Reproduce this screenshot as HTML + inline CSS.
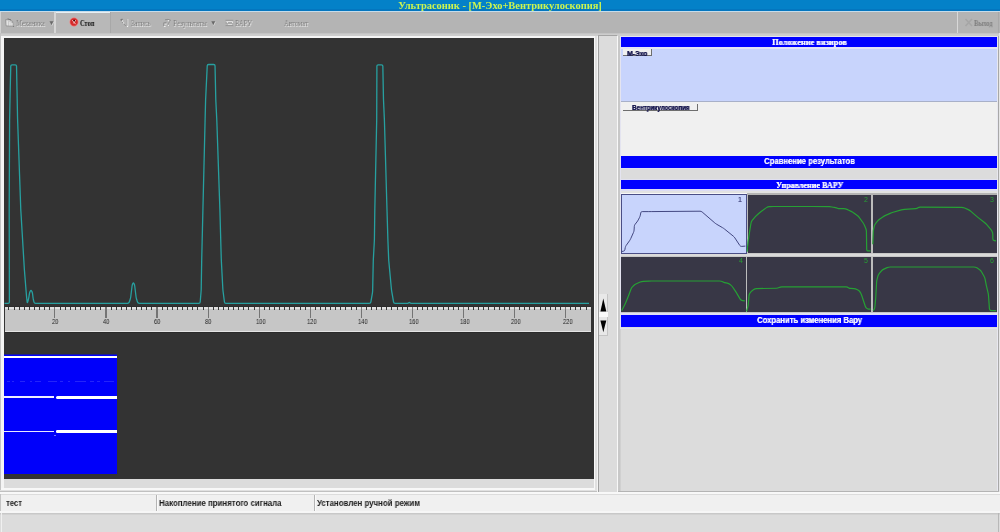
<!DOCTYPE html>
<html><head><meta charset="utf-8"><style>
html,body{margin:0;padding:0;}
body{width:1000px;height:532px;overflow:hidden;position:relative;background:#dcdcdc;}
div{position:absolute;box-sizing:border-box;}
.t{will-change:transform;}
svg{position:absolute;left:0;top:0;}
</style></head><body>
<div style="left:0px;top:0px;width:1000px;height:532px;background:#dcdcdc;"></div>
<div style="left:0px;top:0px;width:1000px;height:10.5px;background:#0481c8;"></div>
<div style="left:0px;top:9px;width:1000px;height:1.5px;background:#0476bf;"></div>
<div style="left:0px;top:10.5px;width:1000px;height:1.5px;background:#c6dcea;"></div>
<div class="t" style="left:199.8px;top:0.3px;width:600px;text-align:center;white-space:nowrap;font:bold 10.45px/12px 'Liberation Serif', serif;color:#ccf450;">Ультрасоник - [М-Эхо+Вентрикулоскопия]</div>
<div style="left:0px;top:12px;width:1000px;height:21px;background:#b4b4b4;"></div>
<div style="left:0px;top:33px;width:1000px;height:2.5px;background:#c4c4c4;"></div>
<div style="left:0px;top:12px;width:1px;height:21px;background:#d0d0d0;"></div>
<div style="left:54px;top:12px;width:1.5px;height:21px;background:#d6d6d6;"></div>
<div style="left:55.5px;top:12px;width:55px;height:21px;background:#b8b8b8;"></div>
<div style="left:55.5px;top:11.5px;width:55px;height:1px;background:#e8f0f4;"></div>
<div style="left:110px;top:12px;width:1px;height:21px;background:#a8a8a8;"></div>
<div style="left:957px;top:12px;width:1px;height:21px;background:#d8d8d8;"></div>
<div style="left:998px;top:12px;width:1px;height:21px;background:#a8a8a8;"></div>
<div class="t" style="left:16px;top:17.9px;white-space:nowrap;transform-origin:0 0;transform:scaleX(0.8585);font:8px/12px 'Liberation Serif', serif;color:#7c7c7c;text-shadow:0.8px 0.8px 0 #ececec;">Механика</div>
<div class="t" style="left:80.4px;top:17.9px;white-space:nowrap;transform-origin:0 0;transform:scaleX(0.8845);font:bold 7.2px/12px 'Liberation Serif', serif;color:#101010;">Стоп</div>
<div class="t" style="left:130.6px;top:17.9px;white-space:nowrap;transform-origin:0 0;transform:scaleX(0.8441);font:8px/12px 'Liberation Serif', serif;color:#7c7c7c;text-shadow:0.8px 0.8px 0 #ececec;">Запись</div>
<div class="t" style="left:173.2px;top:17.9px;white-space:nowrap;transform-origin:0 0;transform:scaleX(0.8973);font:8px/12px 'Liberation Serif', serif;color:#7c7c7c;text-shadow:0.8px 0.8px 0 #ececec;">Результаты</div>
<div class="t" style="left:235px;top:17.9px;white-space:nowrap;transform-origin:0 0;transform:scaleX(0.8280);font:8px/12px 'Liberation Serif', serif;color:#7c7c7c;text-shadow:0.8px 0.8px 0 #ececec;">ВАРУ</div>
<div class="t" style="left:283.5px;top:17.9px;white-space:nowrap;transform-origin:0 0;transform:scaleX(0.8435);font:8px/12px 'Liberation Serif', serif;color:#7c7c7c;text-shadow:0.8px 0.8px 0 #ececec;">Автомат</div>
<div class="t" style="left:974.3px;top:17.9px;white-space:nowrap;transform-origin:0 0;transform:scaleX(0.8714);font:bold 7.4px/12px 'Liberation Serif', serif;color:#7c7c7c;">Выход</div>
<svg width="1000" height="40"><polygon points="49.5,21.2 53.8,21.2 51.65,25.2" fill="#6a6a6a"/><line x1="53.8" y1="21.5" x2="51.9" y2="25.6" stroke="#e6e6e6" stroke-width="0.7"/><polygon points="211.3,21.2 215.6,21.2 213.45,25.2" fill="#6a6a6a"/><line x1="215.6" y1="21.5" x2="213.7" y2="25.6" stroke="#e6e6e6" stroke-width="0.7"/><path d="M5.6,19.6 L8.8,19.1 L12.6,21.4 L13.1,26.2 L6.2,26 Z" fill="#c8c8c8" stroke="#8e8e8e" stroke-width="0.75"/><path d="M7.6,19 L11,19.8" stroke="#707070" stroke-width="0.9"/><path d="M7.2,20.8 L7.2,25.3 M9.9,21.8 L9.9,25.5 M12,23 L12,25.6" stroke="#ececec" stroke-width="1.1"/><circle cx="13.6" cy="26.6" r="0.5" fill="#6a6a6a"/><circle cx="74" cy="22" r="4.2" fill="#d42828" stroke="#f09090" stroke-width="0.7"/><path d="M72.3,20.2 L75.6,24.2 M75.7,20.2 L73.4,23.4" stroke="#f6c8c8" stroke-width="1.0" fill="none"/><circle cx="74.2" cy="20.6" r="0.9" fill="#3a0808"/><path d="M120.6,20.2 L122.6,19.2" stroke="#7a7a7a" stroke-width="1.6"/><path d="M122,22 L125.8,26" stroke="#8c8c8c" stroke-width="0.9"/><path d="M127.8,19 L127.8,26.5" stroke="#d6d6d6" stroke-width="1.3"/><path d="M127,19.5 L127,26" stroke="#9a9a9a" stroke-width="0.5"/><circle cx="122.6" cy="21" r="0.7" fill="#f0f0f0"/><circle cx="123.6" cy="23" r="0.7" fill="#f0f0f0"/><circle cx="127.5" cy="26.4" r="0.6" fill="#f4f4f4"/><path d="M165,19.8 Q168,18.6 171,20.4" stroke="#8a8a8a" stroke-width="0.9" fill="none"/><path d="M168.2,20.5 Q170.4,21.8 168.6,23.3 Q166.8,24.6 169.6,25.8" stroke="#909090" stroke-width="0.9" fill="none"/><path d="M163.6,26 L163.6,22.8 L166.5,22.3" stroke="#8c8c8c" stroke-width="0.8" fill="none"/><circle cx="168.4" cy="20.7" r="0.7" fill="#f0f0f0"/><circle cx="168.6" cy="25.4" r="0.6" fill="#f0f0f0"/><ellipse cx="164.8" cy="26.6" rx="1" ry="0.5" fill="#f4f4f4"/><path d="M164.6,24.6 L167,24" stroke="#e8e8e8" stroke-width="0.7"/><path d="M225.5,20.3 L233.3,20.3 M225.5,23 L233.3,23 M225.5,25.6 L233.3,25.6" stroke="#8e8e8e" stroke-width="0.8"/><path d="M226.3,21.6 L232.8,21.6 M228,24.4 L232,24.4" stroke="#ececec" stroke-width="0.8"/><circle cx="227.4" cy="22.6" r="0.6" fill="#f4f4f4"/><circle cx="232.6" cy="22.6" r="0.6" fill="#f4f4f4"/><path d="M965.5,19 L972,26 M972,19 L965.5,26" stroke="#a6a6a6" stroke-width="1.6"/></svg>
<div style="left:0px;top:34px;width:1000px;height:2px;background:#cdcdcd;"></div>
<div style="left:0px;top:36px;width:597.3px;height:2px;background:#f4f4f4;"></div>
<div style="left:1.3px;top:36px;width:2.4px;height:456px;background:#f4f4f4;"></div>
<div style="left:0px;top:33px;width:1.3px;height:460px;background:#c4c4c4;"></div>
<div style="left:3.7px;top:38px;width:0.5px;height:441px;background:#888888;"></div>
<div style="left:4px;top:38px;width:589.6px;height:441.2px;background:#333333;"></div>
<div style="left:593.6px;top:36px;width:1.6px;height:453.6px;background:#f8f8f8;"></div>
<div style="left:4px;top:479.2px;width:589.6px;height:8.7px;background:#dcdcdc;"></div>
<div style="left:1.3px;top:487.9px;width:593.9px;height:1.7px;background:#f8f8f8;"></div>
<div style="left:595.2px;top:36px;width:1.5px;height:455.3px;background:#e0e0e0;"></div>
<div style="left:0px;top:489.6px;width:596.7px;height:1.7px;background:#e0e0e0;"></div>
<div style="left:596.7px;top:36px;width:0.6px;height:456px;background:#c0c0c0;"></div>
<div style="left:0px;top:491.3px;width:597.3px;height:0.7px;background:#c0c0c0;"></div>
<div style="left:4.7px;top:305.8px;width:586.8px;height:1px;background:#2c2c2c;"></div>
<div style="left:4.7px;top:306.8px;width:586.8px;height:24.4px;background:#c6c6c6;"></div>
<div style="left:4.7px;top:306.8px;width:586.8px;height:2.7px;background:#e0e0e0;"></div>
<div style="left:4.7px;top:331.2px;width:586.8px;height:1px;background:#e4e4e4;"></div>
<div style="left:4.7px;top:332.2px;width:586.8px;height:1px;background:#2a2a2a;"></div>
<div style="left:8.437000000000001px;top:306.8px;width:1px;height:3.4px;background:#383838;"></div>
<div style="left:13.544px;top:306.8px;width:1px;height:3.4px;background:#383838;"></div>
<div style="left:18.651000000000003px;top:306.8px;width:1px;height:3.4px;background:#383838;"></div>
<div style="left:23.758000000000003px;top:306.8px;width:1px;height:3.4px;background:#383838;"></div>
<div style="left:28.865000000000002px;top:306.8px;width:1px;height:3.4px;background:#383838;"></div>
<div style="left:33.972px;top:306.8px;width:1px;height:3.4px;background:#383838;"></div>
<div style="left:39.079px;top:306.8px;width:1px;height:3.4px;background:#383838;"></div>
<div style="left:44.186px;top:306.8px;width:1px;height:3.4px;background:#383838;"></div>
<div style="left:49.293px;top:306.8px;width:1px;height:3.4px;background:#383838;"></div>
<div style="left:54.3px;top:306.8px;width:1.2px;height:11.2px;background:#747474;"></div>
<div class="t" style="left:51.8px;top:317.5px;white-space:nowrap;font:6.7px/8px 'Liberation Sans', sans-serif;color:#1c1c1c;transform-origin:0 0;transform:scaleX(0.86);">20</div>
<div style="left:59.507px;top:306.8px;width:1px;height:3.4px;background:#383838;"></div>
<div style="left:64.614px;top:306.8px;width:1px;height:3.4px;background:#383838;"></div>
<div style="left:69.721px;top:306.8px;width:1px;height:3.4px;background:#383838;"></div>
<div style="left:74.828px;top:306.8px;width:1px;height:3.4px;background:#383838;"></div>
<div style="left:79.935px;top:306.8px;width:1px;height:3.4px;background:#383838;"></div>
<div style="left:85.042px;top:306.8px;width:1px;height:3.4px;background:#383838;"></div>
<div style="left:90.149px;top:306.8px;width:1px;height:3.4px;background:#383838;"></div>
<div style="left:95.256px;top:306.8px;width:1px;height:3.4px;background:#383838;"></div>
<div style="left:100.363px;top:306.8px;width:1px;height:3.4px;background:#383838;"></div>
<div style="left:105.37px;top:306.8px;width:1.2px;height:11.2px;background:#747474;"></div>
<div class="t" style="left:102.87px;top:317.5px;white-space:nowrap;font:6.7px/8px 'Liberation Sans', sans-serif;color:#1c1c1c;transform-origin:0 0;transform:scaleX(0.86);">40</div>
<div style="left:110.577px;top:306.8px;width:1px;height:3.4px;background:#383838;"></div>
<div style="left:115.684px;top:306.8px;width:1px;height:3.4px;background:#383838;"></div>
<div style="left:120.791px;top:306.8px;width:1px;height:3.4px;background:#383838;"></div>
<div style="left:125.89800000000001px;top:306.8px;width:1px;height:3.4px;background:#383838;"></div>
<div style="left:131.00500000000002px;top:306.8px;width:1px;height:3.4px;background:#383838;"></div>
<div style="left:136.11200000000002px;top:306.8px;width:1px;height:3.4px;background:#383838;"></div>
<div style="left:141.21900000000002px;top:306.8px;width:1px;height:3.4px;background:#383838;"></div>
<div style="left:146.32600000000002px;top:306.8px;width:1px;height:3.4px;background:#383838;"></div>
<div style="left:151.43300000000002px;top:306.8px;width:1px;height:3.4px;background:#383838;"></div>
<div style="left:156.44000000000003px;top:306.8px;width:1.2px;height:11.2px;background:#747474;"></div>
<div class="t" style="left:153.94000000000003px;top:317.5px;white-space:nowrap;font:6.7px/8px 'Liberation Sans', sans-serif;color:#1c1c1c;transform-origin:0 0;transform:scaleX(0.86);">60</div>
<div style="left:161.64700000000002px;top:306.8px;width:1px;height:3.4px;background:#383838;"></div>
<div style="left:166.75400000000002px;top:306.8px;width:1px;height:3.4px;background:#383838;"></div>
<div style="left:171.86100000000002px;top:306.8px;width:1px;height:3.4px;background:#383838;"></div>
<div style="left:176.96800000000002px;top:306.8px;width:1px;height:3.4px;background:#383838;"></div>
<div style="left:182.07500000000002px;top:306.8px;width:1px;height:3.4px;background:#383838;"></div>
<div style="left:187.18200000000002px;top:306.8px;width:1px;height:3.4px;background:#383838;"></div>
<div style="left:192.28900000000002px;top:306.8px;width:1px;height:3.4px;background:#383838;"></div>
<div style="left:197.39600000000002px;top:306.8px;width:1px;height:3.4px;background:#383838;"></div>
<div style="left:202.50300000000001px;top:306.8px;width:1px;height:3.4px;background:#383838;"></div>
<div style="left:207.51000000000002px;top:306.8px;width:1.2px;height:11.2px;background:#747474;"></div>
<div class="t" style="left:205.01000000000002px;top:317.5px;white-space:nowrap;font:6.7px/8px 'Liberation Sans', sans-serif;color:#1c1c1c;transform-origin:0 0;transform:scaleX(0.86);">80</div>
<div style="left:212.717px;top:306.8px;width:1px;height:3.4px;background:#383838;"></div>
<div style="left:217.824px;top:306.8px;width:1px;height:3.4px;background:#383838;"></div>
<div style="left:222.931px;top:306.8px;width:1px;height:3.4px;background:#383838;"></div>
<div style="left:228.038px;top:306.8px;width:1px;height:3.4px;background:#383838;"></div>
<div style="left:233.145px;top:306.8px;width:1px;height:3.4px;background:#383838;"></div>
<div style="left:238.252px;top:306.8px;width:1px;height:3.4px;background:#383838;"></div>
<div style="left:243.359px;top:306.8px;width:1px;height:3.4px;background:#383838;"></div>
<div style="left:248.46600000000004px;top:306.8px;width:1px;height:3.4px;background:#383838;"></div>
<div style="left:253.57300000000004px;top:306.8px;width:1px;height:3.4px;background:#383838;"></div>
<div style="left:258.58px;top:306.8px;width:1.2px;height:11.2px;background:#747474;"></div>
<div class="t" style="left:256.08px;top:317.5px;white-space:nowrap;font:6.7px/8px 'Liberation Sans', sans-serif;color:#1c1c1c;transform-origin:0 0;transform:scaleX(0.86);">100</div>
<div style="left:263.787px;top:306.8px;width:1px;height:3.4px;background:#383838;"></div>
<div style="left:268.894px;top:306.8px;width:1px;height:3.4px;background:#383838;"></div>
<div style="left:274.001px;top:306.8px;width:1px;height:3.4px;background:#383838;"></div>
<div style="left:279.108px;top:306.8px;width:1px;height:3.4px;background:#383838;"></div>
<div style="left:284.215px;top:306.8px;width:1px;height:3.4px;background:#383838;"></div>
<div style="left:289.322px;top:306.8px;width:1px;height:3.4px;background:#383838;"></div>
<div style="left:294.429px;top:306.8px;width:1px;height:3.4px;background:#383838;"></div>
<div style="left:299.536px;top:306.8px;width:1px;height:3.4px;background:#383838;"></div>
<div style="left:304.643px;top:306.8px;width:1px;height:3.4px;background:#383838;"></div>
<div style="left:309.65px;top:306.8px;width:1.2px;height:11.2px;background:#747474;"></div>
<div class="t" style="left:307.15px;top:317.5px;white-space:nowrap;font:6.7px/8px 'Liberation Sans', sans-serif;color:#1c1c1c;transform-origin:0 0;transform:scaleX(0.86);">120</div>
<div style="left:314.85699999999997px;top:306.8px;width:1px;height:3.4px;background:#383838;"></div>
<div style="left:319.964px;top:306.8px;width:1px;height:3.4px;background:#383838;"></div>
<div style="left:325.07099999999997px;top:306.8px;width:1px;height:3.4px;background:#383838;"></div>
<div style="left:330.178px;top:306.8px;width:1px;height:3.4px;background:#383838;"></div>
<div style="left:335.285px;top:306.8px;width:1px;height:3.4px;background:#383838;"></div>
<div style="left:340.392px;top:306.8px;width:1px;height:3.4px;background:#383838;"></div>
<div style="left:345.499px;top:306.8px;width:1px;height:3.4px;background:#383838;"></div>
<div style="left:350.606px;top:306.8px;width:1px;height:3.4px;background:#383838;"></div>
<div style="left:355.713px;top:306.8px;width:1px;height:3.4px;background:#383838;"></div>
<div style="left:360.71999999999997px;top:306.8px;width:1.2px;height:11.2px;background:#747474;"></div>
<div class="t" style="left:358.21999999999997px;top:317.5px;white-space:nowrap;font:6.7px/8px 'Liberation Sans', sans-serif;color:#1c1c1c;transform-origin:0 0;transform:scaleX(0.86);">140</div>
<div style="left:365.927px;top:306.8px;width:1px;height:3.4px;background:#383838;"></div>
<div style="left:371.034px;top:306.8px;width:1px;height:3.4px;background:#383838;"></div>
<div style="left:376.141px;top:306.8px;width:1px;height:3.4px;background:#383838;"></div>
<div style="left:381.248px;top:306.8px;width:1px;height:3.4px;background:#383838;"></div>
<div style="left:386.355px;top:306.8px;width:1px;height:3.4px;background:#383838;"></div>
<div style="left:391.462px;top:306.8px;width:1px;height:3.4px;background:#383838;"></div>
<div style="left:396.569px;top:306.8px;width:1px;height:3.4px;background:#383838;"></div>
<div style="left:401.676px;top:306.8px;width:1px;height:3.4px;background:#383838;"></div>
<div style="left:406.783px;top:306.8px;width:1px;height:3.4px;background:#383838;"></div>
<div style="left:411.78999999999996px;top:306.8px;width:1.2px;height:11.2px;background:#747474;"></div>
<div class="t" style="left:409.28999999999996px;top:317.5px;white-space:nowrap;font:6.7px/8px 'Liberation Sans', sans-serif;color:#1c1c1c;transform-origin:0 0;transform:scaleX(0.86);">160</div>
<div style="left:416.997px;top:306.8px;width:1px;height:3.4px;background:#383838;"></div>
<div style="left:422.104px;top:306.8px;width:1px;height:3.4px;background:#383838;"></div>
<div style="left:427.211px;top:306.8px;width:1px;height:3.4px;background:#383838;"></div>
<div style="left:432.318px;top:306.8px;width:1px;height:3.4px;background:#383838;"></div>
<div style="left:437.425px;top:306.8px;width:1px;height:3.4px;background:#383838;"></div>
<div style="left:442.532px;top:306.8px;width:1px;height:3.4px;background:#383838;"></div>
<div style="left:447.639px;top:306.8px;width:1px;height:3.4px;background:#383838;"></div>
<div style="left:452.746px;top:306.8px;width:1px;height:3.4px;background:#383838;"></div>
<div style="left:457.853px;top:306.8px;width:1px;height:3.4px;background:#383838;"></div>
<div style="left:462.85999999999996px;top:306.8px;width:1.2px;height:11.2px;background:#747474;"></div>
<div class="t" style="left:460.35999999999996px;top:317.5px;white-space:nowrap;font:6.7px/8px 'Liberation Sans', sans-serif;color:#1c1c1c;transform-origin:0 0;transform:scaleX(0.86);">180</div>
<div style="left:468.067px;top:306.8px;width:1px;height:3.4px;background:#383838;"></div>
<div style="left:473.174px;top:306.8px;width:1px;height:3.4px;background:#383838;"></div>
<div style="left:478.281px;top:306.8px;width:1px;height:3.4px;background:#383838;"></div>
<div style="left:483.388px;top:306.8px;width:1px;height:3.4px;background:#383838;"></div>
<div style="left:488.495px;top:306.8px;width:1px;height:3.4px;background:#383838;"></div>
<div style="left:493.60200000000003px;top:306.8px;width:1px;height:3.4px;background:#383838;"></div>
<div style="left:498.709px;top:306.8px;width:1px;height:3.4px;background:#383838;"></div>
<div style="left:503.81600000000003px;top:306.8px;width:1px;height:3.4px;background:#383838;"></div>
<div style="left:508.923px;top:306.8px;width:1px;height:3.4px;background:#383838;"></div>
<div style="left:513.9300000000001px;top:306.8px;width:1.2px;height:11.2px;background:#747474;"></div>
<div class="t" style="left:511.43000000000006px;top:317.5px;white-space:nowrap;font:6.7px/8px 'Liberation Sans', sans-serif;color:#1c1c1c;transform-origin:0 0;transform:scaleX(0.86);">200</div>
<div style="left:519.1370000000001px;top:306.8px;width:1px;height:3.4px;background:#383838;"></div>
<div style="left:524.244px;top:306.8px;width:1px;height:3.4px;background:#383838;"></div>
<div style="left:529.3510000000001px;top:306.8px;width:1px;height:3.4px;background:#383838;"></div>
<div style="left:534.4580000000001px;top:306.8px;width:1px;height:3.4px;background:#383838;"></div>
<div style="left:539.565px;top:306.8px;width:1px;height:3.4px;background:#383838;"></div>
<div style="left:544.672px;top:306.8px;width:1px;height:3.4px;background:#383838;"></div>
<div style="left:549.7790000000001px;top:306.8px;width:1px;height:3.4px;background:#383838;"></div>
<div style="left:554.8860000000001px;top:306.8px;width:1px;height:3.4px;background:#383838;"></div>
<div style="left:559.993px;top:306.8px;width:1px;height:3.4px;background:#383838;"></div>
<div style="left:565.0px;top:306.8px;width:1.2px;height:11.2px;background:#747474;"></div>
<div class="t" style="left:562.5px;top:317.5px;white-space:nowrap;font:6.7px/8px 'Liberation Sans', sans-serif;color:#1c1c1c;transform-origin:0 0;transform:scaleX(0.86);">220</div>
<div style="left:570.2070000000001px;top:306.8px;width:1px;height:3.4px;background:#383838;"></div>
<div style="left:575.3140000000001px;top:306.8px;width:1px;height:3.4px;background:#383838;"></div>
<div style="left:580.421px;top:306.8px;width:1px;height:3.4px;background:#383838;"></div>
<div style="left:585.528px;top:306.8px;width:1px;height:3.4px;background:#383838;"></div>
<div style="left:4px;top:354px;width:113px;height:120px;background:#0000fa;"></div>
<div style="left:4px;top:354px;width:113px;height:1px;background:#1a1a9a;"></div>
<div style="left:4px;top:355.7px;width:113px;height:2.4px;background:#ffffff;"></div>
<div style="left:4px;top:396.2px;width:50px;height:2px;background:#eeeeff;"></div>
<div style="left:55.5px;top:395.7px;width:61.5px;height:3.3px;background:#ffffff;border-radius:1.5px 0 0 1.5px;"></div>
<div style="left:4px;top:431px;width:49.5px;height:1.4px;background:#e8e8ff;"></div>
<div style="left:55.5px;top:430.4px;width:61.5px;height:2.7px;background:#ffffff;border-radius:1.3px 0 0 1.3px;"></div>
<div style="left:53.5px;top:434.5px;width:2px;height:1px;background:#7070f8;"></div>
<div style="left:7px;top:380.7px;width:3px;height:0.8px;background:#2424fa;"></div>
<div style="left:12px;top:380.7px;width:2px;height:0.8px;background:#2424fa;"></div>
<div style="left:20px;top:380.7px;width:5px;height:0.8px;background:#2424fa;"></div>
<div style="left:30px;top:380.7px;width:2px;height:0.8px;background:#2424fa;"></div>
<div style="left:35px;top:380.7px;width:6px;height:0.8px;background:#2424fa;"></div>
<div style="left:48px;top:380.7px;width:9px;height:0.8px;background:#2424fa;"></div>
<div style="left:60px;top:380.7px;width:3px;height:0.8px;background:#2424fa;"></div>
<div style="left:68px;top:380.7px;width:2px;height:0.8px;background:#2424fa;"></div>
<div style="left:75px;top:380.7px;width:11px;height:0.8px;background:#2424fa;"></div>
<div style="left:90px;top:380.7px;width:4px;height:0.8px;background:#2424fa;"></div>
<div style="left:97px;top:380.7px;width:3px;height:0.8px;background:#2424fa;"></div>
<div style="left:104px;top:380.7px;width:10px;height:0.8px;background:#2424fa;"></div>
<div style="left:597.3px;top:35.5px;width:1px;height:457px;background:#f4f4f4;"></div>
<div style="left:598.3px;top:35.5px;width:1px;height:457px;background:#a0a0a0;"></div>
<div style="left:598.3px;top:35.3px;width:18.5px;height:0.8px;background:#a4a4a4;"></div>
<div style="left:599.3px;top:36.1px;width:17.5px;height:456px;background:#dcdcdc;"></div>
<div style="left:616.8px;top:35.5px;width:1.4px;height:457px;background:#f8f8f8;"></div>
<div style="left:618.2px;top:35.5px;width:2.2px;height:457px;background:#c8c8c8;"></div>
<div style="left:620.4px;top:36px;width:0.8px;height:293px;background:#e4e4f0;"></div>
<div style="left:620.4px;top:329px;width:0.8px;height:162px;background:#d0d0d0;"></div>
<div style="left:599px;top:294px;width:8.5px;height:42.3px;background:#e8e8e8;border-right:1px solid #c4c4c4;border-bottom:1px solid #c4c4c4;"></div>
<div style="left:599px;top:312px;width:8.5px;height:5px;background:#fafafa;"></div>
<svg width="1000" height="532" style="left:0;top:0"><polygon points="603.3,298.5 600.4,311.5 606.3,311.5" fill="#000"/><polygon points="600.4,320.5 606.3,320.5 603.3,332.3" fill="#000"/></svg>
<div style="left:620.4px;top:36px;width:377px;height:1.2px;background:#e4e4f0;"></div>
<div style="left:621.2px;top:37.3px;width:375.4px;height:9.9px;background:#0000ff;"></div>
<div class="t" style="left:771.8px;top:36.2px;white-space:nowrap;transform-origin:0 0;transform:scaleX(0.9691);font:bold 8.6px/12px 'Liberation Serif', serif;color:#f4f4ff;text-shadow:0.3px 0 0 #f4f4ff;">Положение визиров</div>
<div style="left:621.2px;top:47.2px;width:375.4px;height:1.8px;background:#e4e4f6;"></div>
<div style="left:621.2px;top:49px;width:375.4px;height:51.8px;background:#c8d4fc;"></div>
<div style="left:621.2px;top:100.8px;width:375.4px;height:1.2px;background:#a8b0c8;"></div>
<div style="left:621.2px;top:102px;width:375.4px;height:54.1px;background:#f0f0f0;"></div>
<div style="left:996.6px;top:36px;width:1.2px;height:456px;background:#e8e8f0;"></div>
<div style="left:997.8px;top:36px;width:1px;height:456px;background:#a8a8a8;"></div>
<div style="left:998.8px;top:33px;width:1.2px;height:460px;background:#e6e6e6;"></div>
<div style="left:623px;top:49px;width:28.8px;height:6.8px;background:#f0f0f0;"></div>
<div style="left:650.8px;top:49px;width:1px;height:6.8px;background:#6e6e6e;"></div>
<div style="left:623px;top:54.8px;width:28.8px;height:1px;background:#6e6e6e;"></div>
<div class="t" style="left:627.25px;top:47.7px;white-space:nowrap;transform-origin:0 0;transform:scaleX(0.9579);font:bold 7.0px/12px 'Liberation Sans', sans-serif;color:#14144c;text-shadow:0.35px 0 0 #14144c;">М-Эхо</div>
<div style="left:623px;top:104px;width:74.8px;height:6.8px;background:#f0f0f0;"></div>
<div style="left:696.8px;top:104px;width:1px;height:6.8px;background:#6e6e6e;"></div>
<div style="left:623px;top:109.8px;width:74.8px;height:1px;background:#6e6e6e;"></div>
<div class="t" style="left:632px;top:102.4px;white-space:nowrap;transform-origin:0 0;transform:scaleX(0.9606);font:bold 6.4px/12px 'Liberation Sans', sans-serif;color:#14144c;text-shadow:0.35px 0 0 #14144c;">Вентрикулоскопия</div>
<div style="left:621.2px;top:156.1px;width:375.4px;height:11.8px;background:#0000ff;"></div>
<div class="t" style="left:763.8px;top:154.6px;white-space:nowrap;transform-origin:0 0;transform:scaleX(0.8947);font:bold 8.6px/12px 'Liberation Sans', sans-serif;color:#f4f4ff;text-shadow:0.25px 0 0 #f4f4ff;">Сравнение результатов</div>
<div style="left:621.2px;top:167.9px;width:375.4px;height:1.2px;background:#e0e0f0;"></div>
<div style="left:621.2px;top:169.1px;width:375.4px;height:10px;background:#dcdcdc;"></div>
<div style="left:621.2px;top:179.1px;width:375.4px;height:0.8px;background:#e0e0f0;"></div>
<div style="left:621.2px;top:179.9px;width:375.4px;height:8.8px;background:#0000ff;"></div>
<div class="t" style="left:775.7px;top:179.6px;white-space:nowrap;transform-origin:0 0;transform:scaleX(0.9762);font:bold 8.3px/12px 'Liberation Serif', serif;color:#f4f4ff;text-shadow:0.3px 0 0 #f4f4ff;">Управление ВАРУ</div>
<div style="left:621.2px;top:188.7px;width:375.4px;height:1.9px;background:#dcdcf4;"></div>
<div style="left:621.2px;top:190.6px;width:375.4px;height:2.3px;background:#e2e2e2;"></div>
<div style="left:621.2px;top:192.9px;width:375.4px;height:1.1px;background:#f8f8f8;"></div>
<div style="left:621.2px;top:193.8px;width:375.4px;height:121px;background:#bcbcbc;"></div>
<div style="left:746.9px;top:192.9px;width:250px;height:2.1px;background:#b4b4b4;"></div>
<div style="left:621.2px;top:253.4px;width:375.4px;height:3.2px;background:#c8c8c8;"></div>
<div style="left:621.2px;top:254.3px;width:375.4px;height:1.4px;background:#dadada;"></div>
<div style="left:621.3px;top:194.0px;width:125.6px;height:60px;background:#c8d4fc;border:1px solid #4a4e86;"></div>
<div style="left:748.0px;top:195.0px;width:123.4px;height:57.7px;background:#383746;"></div>
<div style="left:872.9px;top:195.0px;width:123.7px;height:57.7px;background:#383746;"></div>
<div style="left:621.3px;top:256.6px;width:124.5px;height:55.2px;background:#383746;"></div>
<div style="left:747.4px;top:256.6px;width:124.0px;height:55.2px;background:#383746;"></div>
<div style="left:872.9px;top:256.6px;width:123.7px;height:55.2px;background:#383746;"></div>
<div style="left:621.2px;top:311.8px;width:375.4px;height:1.6px;background:#c8c8c8;"></div>
<div style="left:621.2px;top:313.4px;width:375.4px;height:1.5px;background:#e0e0f4;"></div>
<div style="left:621.2px;top:314.9px;width:375.4px;height:12.6px;background:#0000ff;"></div>
<div class="t" style="left:757px;top:314.2px;white-space:nowrap;transform-origin:0 0;transform:scaleX(0.8925);font:bold 8.6px/12px 'Liberation Sans', sans-serif;color:#f4f4ff;text-shadow:0.25px 0 0 #f4f4ff;">Сохранить изменения Вару</div>
<div style="left:621.2px;top:327.5px;width:375.4px;height:1.5px;background:#e0e0f4;"></div>
<div style="left:618.2px;top:490.8px;width:381px;height:1.2px;background:#b4b4b4;"></div>
<div style="left:0px;top:492px;width:1000px;height:2.2px;background:#f8f8f8;"></div>
<div style="left:0px;top:494.2px;width:1000px;height:16.6px;background:#f0f0f0;"></div>
<div style="left:0px;top:494.2px;width:1000px;height:1px;background:#dcdcdc;"></div>
<div style="left:0px;top:494.2px;width:1px;height:16.6px;background:#c4c4c4;"></div>
<div style="left:156px;top:494.5px;width:1px;height:16px;background:#b4b4b4;"></div>
<div style="left:157px;top:494.5px;width:1.2px;height:16px;background:#fafafa;"></div>
<div style="left:313.5px;top:494.5px;width:1px;height:16px;background:#b4b4b4;"></div>
<div style="left:314.5px;top:494.5px;width:1.2px;height:16px;background:#fafafa;"></div>
<div class="t" style="left:6.3px;top:497.6px;white-space:nowrap;transform-origin:0 0;transform:scaleX(0.8951);font:bold 8.6px/10px 'Liberation Sans', sans-serif;color:#1a1a1a;">тест</div>
<div class="t" style="left:159px;top:497.6px;white-space:nowrap;transform-origin:0 0;transform:scaleX(0.9176);font:bold 8.6px/10px 'Liberation Sans', sans-serif;color:#1a1a1a;">Накопление принятого сигнала</div>
<div class="t" style="left:317.2px;top:497.6px;white-space:nowrap;transform-origin:0 0;transform:scaleX(0.9150);font:bold 8.6px/10px 'Liberation Sans', sans-serif;color:#1a1a1a;">Установлен ручной режим</div>
<div style="left:0px;top:510.8px;width:1000px;height:1.9px;background:#f6f6f6;"></div>
<div style="left:0px;top:512.7px;width:1000px;height:1.3px;background:#c8c8c8;"></div>
<div style="left:0px;top:514px;width:1000px;height:1.2px;background:#d2d2d2;"></div>
<div style="left:0px;top:515.2px;width:1000px;height:16.8px;background:#dcdcdc;"></div>
<div style="left:1px;top:513px;width:1.4px;height:19px;background:#f0f0f0;"></div>
<div style="left:998.4px;top:513px;width:1px;height:19px;background:#b8b8b8;"></div>
<div class="t" style="left:738.3000000000001px;top:194.7px;white-space:nowrap;font:bold 7px/10px 'Liberation Sans', sans-serif;color:#4a4e86;">1</div>
<div class="t" style="left:863.6px;top:194.7px;white-space:nowrap;font:7px/10px 'Liberation Sans', sans-serif;color:#26a034;">2</div>
<div class="t" style="left:989.6px;top:194.7px;white-space:nowrap;font:7px/10px 'Liberation Sans', sans-serif;color:#26a034;">3</div>
<div class="t" style="left:738.7px;top:256.0px;white-space:nowrap;font:7px/10px 'Liberation Sans', sans-serif;color:#26a034;">4</div>
<div class="t" style="left:863.6px;top:256.3px;white-space:nowrap;font:7px/10px 'Liberation Sans', sans-serif;color:#26a034;">5</div>
<div class="t" style="left:989.6px;top:256.0px;white-space:nowrap;font:7px/10px 'Liberation Sans', sans-serif;color:#26a034;">6</div>
<svg width="1000" height="532">
<path d="M4.50,303.30 L8.10,303.30 Q9.40,303.30 9.40,302.00 L9.20,211.30 Q9.20,210.00 9.21,208.70 L9.59,121.30 Q9.60,120.00 9.63,118.70 L10.17,91.30 Q10.20,90.00 10.23,88.70 L10.77,66.10 Q10.80,64.80 12.10,64.80 L15.20,64.80 Q16.50,64.80 16.53,66.10 L16.97,88.70 Q17.00,90.00 17.03,91.30 L17.57,118.70 Q17.60,120.00 17.65,121.30 L20.75,208.70 Q20.80,210.00 20.88,211.30 L24.32,268.70 Q24.40,270.00 24.51,271.30 L26.49,295.70 Q26.60,297.00 26.74,298.29 L27.16,302.01 Q27.30,303.30 27.68,302.06 L28.22,300.24 Q28.60,299.00 28.80,297.72 L29.40,293.78 Q29.60,292.50 30.20,291.35 L30.40,290.95 Q31.00,289.80 31.60,290.95 L31.80,291.35 Q32.40,292.50 32.56,293.79 L33.04,297.71 Q33.20,299.00 33.52,300.26 L33.98,302.04 Q34.30,303.30 35.60,303.30 L127.60,303.30 Q128.90,303.30 129.30,302.06 L130.20,299.24 Q130.60,298.00 130.76,296.71 L132.04,286.29 Q132.20,285.00 132.71,283.81 L132.89,283.39 Q133.40,282.20 133.91,283.39 L134.09,283.81 Q134.60,285.00 134.76,286.29 L136.04,296.71 Q136.20,298.00 136.60,299.24 L137.50,302.06 Q137.90,303.30 139.20,303.30 L198.80,303.30 Q200.10,303.30 200.21,302.00 L201.09,291.30 Q201.20,290.00 201.22,288.70 L201.68,261.30 Q201.70,260.00 201.73,258.70 L202.87,211.30 Q202.90,210.00 202.93,208.70 L205.07,121.30 Q205.10,120.00 205.13,118.70 L205.57,101.30 Q205.60,100.00 205.66,98.70 L207.24,65.80 Q207.30,64.50 208.60,64.50 L213.70,64.50 Q215.00,64.50 215.03,65.80 L215.77,98.70 Q215.80,100.00 215.86,101.30 L216.74,118.70 Q216.80,120.00 216.84,121.30 L219.86,208.70 Q219.90,210.00 219.94,211.30 L221.26,258.70 Q221.30,260.00 221.37,261.30 L222.83,288.70 Q222.90,290.00 223.06,291.29 L224.44,302.01 Q224.60,303.30 225.90,303.30 L369.30,303.30 Q370.60,303.30 370.83,302.02 L372.37,293.28 Q372.60,292.00 372.63,290.70 L373.27,261.30 Q373.30,260.00 373.37,258.70 L374.33,241.30 Q374.40,240.00 374.42,238.70 L374.78,211.30 Q374.80,210.00 374.83,208.70 L376.67,121.30 Q376.70,120.00 376.70,118.70 L376.90,66.10 Q376.90,64.80 378.20,64.80 L381.50,64.80 Q382.80,64.80 382.83,66.10 L383.47,98.70 Q383.50,100.00 383.56,101.30 L384.34,118.70 Q384.40,120.00 384.44,121.30 L386.96,208.70 Q387.00,210.00 387.04,211.30 L387.86,238.70 Q387.90,240.00 387.95,241.30 L388.65,258.70 Q388.70,260.00 388.82,261.29 L391.38,288.71 Q391.50,290.00 391.72,291.28 L393.58,302.02 Q393.80,303.30 395.10,303.30 L407.56,303.30 Q408.30,303.30 408.80,302.75 L408.80,302.75 Q409.30,302.20 409.80,302.75 L409.80,302.75 Q410.30,303.30 411.04,303.30 L589.00,303.30" fill="none" stroke="#27a0a0" stroke-width="1.3" stroke-linejoin="round"/>
<path d="M621.80,251.50 L623.42,251.21 Q624.60,251.00 624.83,249.82 L625.27,247.58 Q625.50,246.40 626.20,245.42 L629.50,240.78 Q630.20,239.80 630.69,238.70 L633.51,232.40 Q634.00,231.30 634.08,230.10 L634.32,226.40 Q634.40,225.20 635.14,224.26 L636.96,221.94 Q637.70,221.00 638.25,219.93 L639.55,217.37 Q640.10,216.30 640.33,215.12 L640.77,212.78 Q641.00,211.60 642.20,211.60 L648.80,211.60 Q650.00,211.60 651.20,211.59 L700.00,211.21 Q701.20,211.20 702.11,211.98 L714.79,222.92 Q715.70,223.70 716.74,224.30 L722.56,227.70 Q723.60,228.30 724.53,229.06 L733.27,236.14 Q734.20,236.90 734.86,237.90 L739.84,245.50 Q740.50,246.50 741.70,246.40 L745.40,246.10" fill="none" stroke="#3c407a" stroke-width="0.95"/>
<path d="M747.10,251.70 L747.95,242.99 Q748.10,241.40 748.34,239.82 L749.46,232.58 Q749.70,231.00 749.95,229.42 L750.95,223.28 Q751.20,221.70 752.19,220.44 L754.31,217.76 Q755.30,216.50 756.50,215.44 L759.30,212.96 Q760.50,211.90 761.80,210.97 L766.50,207.63 Q767.80,206.70 769.40,206.62 L770.30,206.58 Q771.90,206.50 773.50,206.50 L808.40,206.50 Q810.00,206.50 811.60,206.52 L829.46,206.69 Q830.70,206.70 831.90,207.00 L831.90,207.00 Q833.10,207.30 834.33,207.45 L835.25,207.56 Q836.40,207.70 837.45,208.20 L837.45,208.20 Q838.50,208.70 839.66,208.70 L843.90,208.70 Q845.50,208.70 846.95,209.38 L848.80,210.24 Q850.00,210.80 851.20,211.35 L851.20,211.35 Q852.40,211.90 853.46,212.69 L857.32,215.55 Q858.60,216.50 859.53,217.80 L862.87,222.50 Q863.80,223.80 864.42,225.28 L865.78,228.52 Q866.40,230.00 866.42,231.60 L866.69,248.92 Q866.70,249.60 866.90,250.25 L866.90,250.25 Q867.10,250.90 867.78,250.90 L870.50,250.90" fill="none" stroke="#26a034" stroke-width="1.2"/>
<path d="M872.80,244.20 L873.24,231.70 Q873.30,230.10 873.69,228.55 L874.31,226.05 Q874.70,224.50 875.71,223.26 L877.49,221.04 Q878.50,219.80 879.82,218.90 L882.78,216.90 Q884.10,216.00 885.56,215.36 L890.14,213.34 Q891.60,212.70 893.14,212.25 L901.36,209.85 Q902.90,209.40 904.50,209.30 L915.82,208.58 Q917.00,208.50 917.95,207.80 L917.95,207.80 Q918.90,207.10 920.08,207.11 L961.60,207.29 Q963.20,207.30 964.65,207.97 L968.25,209.63 Q969.70,210.30 970.91,211.35 L976.09,215.85 Q977.30,216.90 978.56,217.89 L984.44,222.51 Q985.70,223.50 986.75,224.71 L990.38,228.92 Q991.40,230.10 992.10,231.50 L992.10,231.50 Q992.80,232.90 992.80,234.47 L992.80,238.80 Q992.80,240.40 994.38,240.64 L996.10,240.90" fill="none" stroke="#26a034" stroke-width="1.2"/>
<path d="M621.80,310.60 L624.88,304.43 Q625.60,303.00 626.19,301.51 L628.41,295.99 Q629.00,294.50 629.56,293.00 L630.94,289.30 Q631.50,287.80 632.63,286.67 L633.77,285.53 Q634.90,284.40 636.36,283.75 L640.24,282.05 Q641.70,281.40 643.30,281.32 L648.50,281.08 Q650.10,281.00 651.70,281.00 L719.60,281.00 Q721.20,281.00 722.62,281.73 L723.08,281.97 Q724.50,282.70 726.08,282.96 L727.22,283.14 Q728.80,283.40 730.04,284.41 L730.86,285.09 Q732.10,286.10 732.96,287.45 L735.54,291.45 Q736.40,292.80 737.22,294.17 L740.18,299.13 Q741.00,300.50 742.59,300.67 L744.80,300.90" fill="none" stroke="#26a034" stroke-width="1.2"/>
<path d="M746.50,311.50 L747.76,307.04 Q748.20,305.50 748.33,303.91 L748.97,296.09 Q749.10,294.50 749.91,293.12 L749.99,292.98 Q750.80,291.60 752.10,290.67 L753.70,289.53 Q755.00,288.60 756.60,288.57 L776.35,288.23 Q777.80,288.20 779.10,287.55 L779.10,287.55 Q780.40,286.90 781.85,286.90 L846.11,286.90 Q847.40,286.90 848.45,287.65 L848.45,287.65 Q849.50,288.40 850.79,288.44 L853.90,288.55 Q855.50,288.60 856.86,289.44 L858.34,290.36 Q859.70,291.20 860.43,292.62 L860.67,293.08 Q861.40,294.50 861.90,296.02 L865.20,305.99 Q865.60,307.20 866.45,308.15 L866.45,308.15 Q867.30,309.10 868.57,309.10 L870.70,309.10" fill="none" stroke="#26a034" stroke-width="1.2"/>
<path d="M873.10,310.70 L873.90,309.65 Q874.70,308.60 874.83,307.29 L875.55,299.89 Q875.70,298.30 875.79,296.70 L876.61,282.30 Q876.70,280.70 877.10,279.15 L877.90,276.05 Q878.30,274.50 879.35,273.29 L881.35,271.01 Q882.40,269.80 883.86,269.14 L887.14,267.66 Q888.60,267.00 890.20,267.00 L973.90,267.00 Q975.50,267.00 976.85,267.86 L979.35,269.44 Q980.70,270.30 981.48,271.70 L984.02,276.20 Q984.80,277.60 985.10,279.17 L986.10,284.33 Q986.40,285.90 986.78,287.45 L988.02,292.55 Q988.40,294.10 988.51,295.70 L989.43,308.67 Q989.50,309.60 990.25,310.15 L990.25,310.15 Q991.00,310.70 991.93,310.70 L996.20,310.70" fill="none" stroke="#26a034" stroke-width="1.2"/>
</svg>
</body></html>
